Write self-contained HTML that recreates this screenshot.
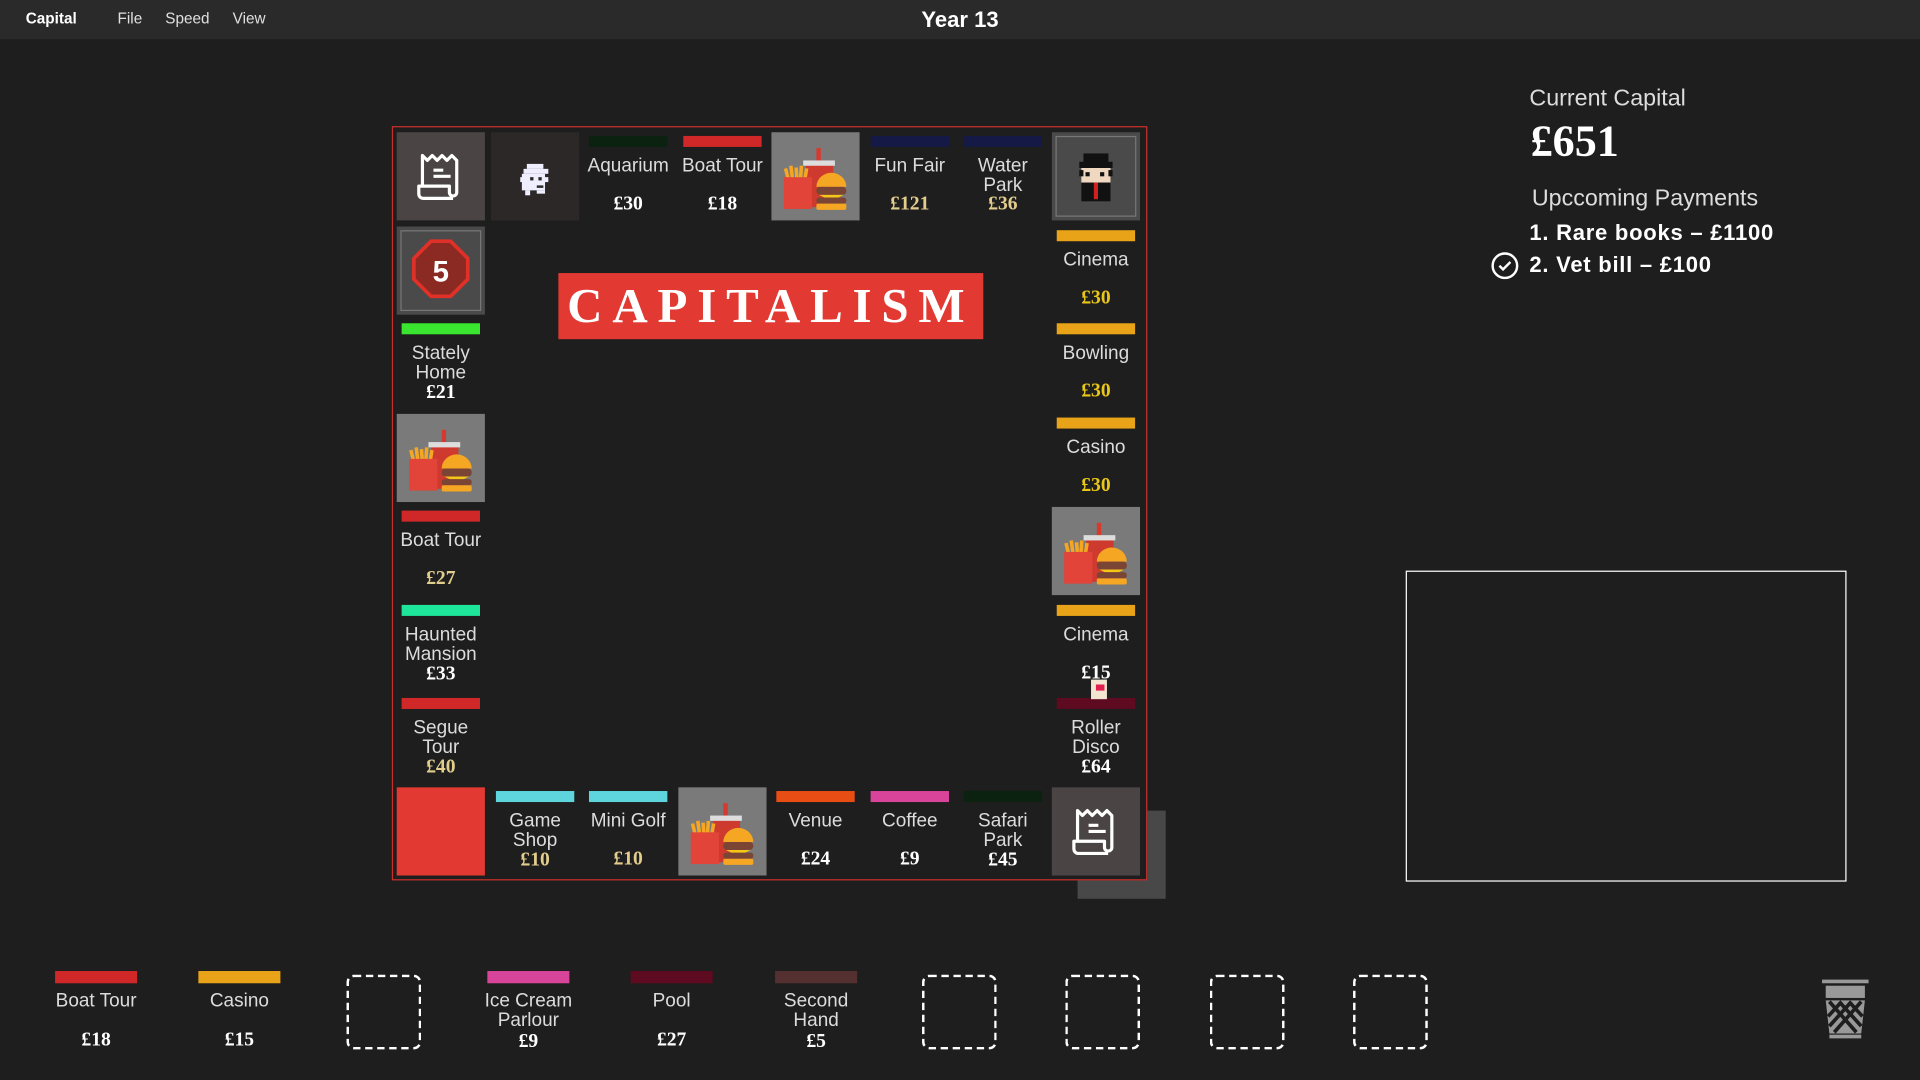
<!DOCTYPE html>
<html><head><meta charset="utf-8">
<style>
*{margin:0;padding:0;box-sizing:border-box}
html,body{width:1920px;height:1080px;overflow:hidden;background:#1f1e1e}
#w{position:absolute;left:0;top:0;width:1568px;height:882px;transform:scale(1.22449);transform-origin:0 0;font-family:"Liberation Sans Narrow","Liberation Sans",sans-serif;color:#e6e6e6}
.a{position:absolute}
.menu{left:0;top:0;width:1568px;height:32px;background:#2a2a2a}
.mi{top:8px;font-size:12.5px;color:#e0e0e0}
.cell{position:absolute;width:72px;height:72px;text-align:center}
.bar{position:absolute;left:4px;top:3px;width:64px;height:9px}
.nm{position:absolute;left:-6px;right:-6px;top:20px;font-size:15.5px;line-height:16px;color:#dcdcdc}
.pr{position:absolute;left:0;right:0;top:50px;font-family:"Liberation Serif",serif;font-weight:bold;font-size:16px;color:#fff}
.tan{color:#e3cd8c}.yel{color:#e8c61a}
.dark{background:#4b4444}
.gray{background:#7a7a7a}
.slot{position:absolute;top:793px;width:67px;height:70px;text-align:center}
.dash{position:absolute;top:796px;width:61px;height:61px;border:2.5px dashed #fff;border-radius:6px}
</style></head><body>
<svg width="0" height="0" style="position:absolute">
<defs>
<symbol id="food" viewBox="0 0 100 100">
<rect x="51" y="18" width="5" height="16" fill="#d63a2e"/>
<rect x="39" y="37" width="31" height="48" fill="#cf3a2f"/>
<rect x="36" y="32" width="36" height="6" fill="#dddddd"/>
<path d="M16 41 l3 12 M22 38 l2 15 M28 40 l1 13 M34 38 l-1 15 M40 41 l-2 12" stroke="#f5a623" stroke-width="4"/>
<rect x="14" y="51" width="32" height="36" fill="#e2443a"/>
<path d="M51 62 a17 16 0 0 1 34 0 z" fill="#f5a623"/>
<rect x="51" y="62" width="34" height="9" rx="4" fill="#7a4534"/>
<path d="M54 71 h28 l-14 7 z" fill="#f5c518"/>
<rect x="51" y="74" width="34" height="7" rx="3" fill="#7a4534"/>
<rect x="51" y="81" width="34" height="7" rx="2" fill="#f5a623"/>
</symbol>
<symbol id="rcpt" viewBox="0 0 72 72">
<path d="M21 44 V19 l4 4 4 -4 4 4 4 -4 4 4 4 -4 4 4 V49 c0 4 -6 4 -6 0 V44 H18 v6 c0 3 2 4 4 4 h24" fill="none" stroke="#fff" stroke-width="2.6" stroke-linejoin="round"/>
<path d="M30 31 h8 M30 36 h14" stroke="#fff" stroke-width="2.6"/>
</symbol>
</defs></svg>
<div id="w">
<div class="a menu"></div>
<div class="a mi" style="left:21px;font-weight:bold;color:#fff">Capital</div>
<div class="a mi" style="left:96px">File</div>
<div class="a mi" style="left:135px">Speed</div>
<div class="a mi" style="left:190px">View</div>
<div class="a" style="left:700px;width:168px;text-align:center;top:6px;font-size:18px;font-weight:bold;color:#fff">Year 13</div>

<div class="a" style="left:880px;top:662px;width:72px;height:72px;background:#484848"></div>
<div class="a" style="left:320px;top:103px;width:617px;height:616px;border:1px solid #c9302c;background:#1f1e1e"></div>

<div class="cell dark" style="left:324px;top:108px"><svg width="72" height="72"><use href="#rcpt"/></svg></div>
<div class="cell" style="left:401px;top:108px;background:#2c2828">
<svg width="72" height="72" viewBox="0 0 72 72"><g transform="translate(36,38) scale(1.35) translate(-36,-38)"><g fill="#eef"><rect x="31" y="29" width="10" height="3"/><rect x="29" y="32" width="15" height="3"/><rect x="28" y="35" width="14" height="10"/><rect x="27" y="37" width="17" height="3"/><rect x="30" y="45" width="3" height="3"/><rect x="37" y="45" width="5" height="2"/></g><rect x="33" y="37" width="2" height="2" fill="#2c2828"/><rect x="38" y="37" width="2" height="2" fill="#2c2828"/><rect x="37" y="42" width="4" height="1.5" fill="#2c2828"/></g></svg></div>
<div class="cell" style="left:477px;top:108px"><div class="bar" style="background:#0b2210"></div><div class="nm">Aquarium</div><div class="pr">£30</div></div>
<div class="cell" style="left:554px;top:108px"><div class="bar" style="background:#d02828"></div><div class="nm">Boat Tour</div><div class="pr">£18</div></div>
<div class="cell gray" style="left:630px;top:108px"><svg width="72" height="72"><use href="#food"/></svg></div>
<div class="cell" style="left:707px;top:108px"><div class="bar" style="background:#141a45"></div><div class="nm">Fun Fair</div><div class="pr tan">£121</div></div>
<div class="cell" style="left:783px;top:108px"><div class="bar" style="background:#141a45"></div><div class="nm">Water<br>Park</div><div class="pr tan">£36</div></div>
<div class="cell" style="left:859px;top:108px;background:#4a4a4a"><div class="a" style="left:3px;top:3px;width:66px;height:66px;border:1px solid #777"></div>
<svg width="72" height="72" viewBox="0 0 72 72"><g transform="translate(36,36) scale(1.7) translate(-36,-36)"><rect x="30" y="25" width="12" height="5" fill="#111"/><rect x="28" y="29" width="16" height="3" fill="#111"/><rect x="29" y="32" width="14" height="7" fill="#f0d8c0"/><rect x="31" y="34" width="2" height="2" fill="#111"/><rect x="38" y="34" width="2" height="2" fill="#111"/><rect x="28" y="33" width="2" height="3" fill="#111"/><rect x="42" y="33" width="2" height="3" fill="#111"/><rect x="29" y="39" width="14" height="9" fill="#111"/><rect x="35" y="39" width="2" height="8" fill="#d02020"/></g></svg></div>

<div class="cell" style="left:324px;top:185px;background:#4a4a4a"><div class="a" style="left:3px;top:3px;width:66px;height:66px;border:1px solid #777"></div>
<svg width="72" height="72" viewBox="0 0 72 72"><polygon points="28,9 44,9 58,23 58,40 44,54 28,54 14,40 14,23" transform="translate(0,3)" fill="#8a2a22" stroke="#e03028" stroke-width="3"/><text x="36" y="45" text-anchor="middle" font-family="Liberation Sans,sans-serif" font-size="24" font-weight="bold" fill="#fff">5</text></svg></div>
<div class="cell" style="left:324px;top:261px"><div class="bar" style="background:#3ae530"></div><div class="nm">Stately<br>Home</div><div class="pr" style="top:51px">£21</div></div>
<div class="cell gray" style="left:324px;top:338px"><svg width="72" height="72"><use href="#food"/></svg></div>
<div class="cell" style="left:324px;top:414px"><div class="bar" style="background:#d02828"></div><div class="nm">Boat Tour</div><div class="pr tan">£27</div></div>
<div class="cell" style="left:324px;top:491px"><div class="bar" style="background:#1de59a"></div><div class="nm">Haunted<br>Mansion</div><div class="pr" style="top:51px">£33</div></div>
<div class="cell" style="left:324px;top:567px"><div class="bar" style="background:#d02828"></div><div class="nm">Segue<br>Tour</div><div class="pr tan" style="top:51px">£40</div></div>
<div class="cell" style="left:324px;top:643px;background:#e23a32"></div>

<div class="cell" style="left:859px;top:185px"><div class="bar" style="background:#e8a318"></div><div class="nm">Cinema</div><div class="pr yel">£30</div></div>
<div class="cell" style="left:859px;top:261px"><div class="bar" style="background:#e8a318"></div><div class="nm">Bowling</div><div class="pr yel">£30</div></div>
<div class="cell" style="left:859px;top:338px"><div class="bar" style="background:#e8a318"></div><div class="nm">Casino</div><div class="pr yel">£30</div></div>
<div class="cell gray" style="left:859px;top:414px"><svg width="72" height="72"><use href="#food"/></svg></div>
<div class="cell" style="left:859px;top:491px"><div class="bar" style="background:#e8a318"></div><div class="nm">Cinema</div><div class="pr">£15</div></div>
<div class="cell" style="left:859px;top:567px"><div class="bar" style="background:#5e0a20"></div><div class="nm">Roller<br>Disco</div><div class="pr" style="top:51px">£64</div></div>
<div class="a" style="left:891px;top:555px;width:13px;height:16px;background:#f2e6d0"></div><div class="a" style="left:895px;top:559px;width:7px;height:5px;background:#e02050"></div>
<div class="cell dark" style="left:859px;top:643px"><svg width="72" height="72"><use href="#rcpt"/></svg></div>

<div class="cell" style="left:401px;top:643px"><div class="bar" style="background:#5ed5dd"></div><div class="nm">Game<br>Shop</div><div class="pr tan" style="top:51px">£10</div></div>
<div class="cell" style="left:477px;top:643px"><div class="bar" style="background:#5ed5dd"></div><div class="nm">Mini Golf</div><div class="pr tan">£10</div></div>
<div class="cell gray" style="left:554px;top:643px"><svg width="72" height="72"><use href="#food"/></svg></div>
<div class="cell" style="left:630px;top:643px"><div class="bar" style="background:#e84e14"></div><div class="nm">Venue</div><div class="pr">£24</div></div>
<div class="cell" style="left:707px;top:643px"><div class="bar" style="background:#d8449a"></div><div class="nm">Coffee</div><div class="pr">£9</div></div>
<div class="cell" style="left:783px;top:643px"><div class="bar" style="background:#0b2210"></div><div class="nm">Safari<br>Park</div><div class="pr" style="top:51px">£45</div></div>

<div class="a" style="left:456px;top:223px;width:347px;height:54px;background:#e23a32;color:#fff;text-align:center;font-family:'Liberation Serif',serif;font-weight:bold;font-size:40px;line-height:54px;letter-spacing:8px">CAPITALISM</div>

<div class="a" style="left:1249px;top:70px;font-family:'Liberation Sans',sans-serif;font-size:19px;color:#ddd">Current Capital</div>
<div class="a" style="left:1250px;top:94px;font-family:'Liberation Serif',serif;font-weight:bold;font-size:36px;color:#fff">£651</div>
<div class="a" style="left:1251px;top:152px;font-family:'Liberation Sans',sans-serif;font-size:19px;color:#ddd">Upccoming Payments</div>
<div class="a" style="left:1249px;top:180px;font-family:'Liberation Sans',sans-serif;font-weight:bold;font-size:18px;letter-spacing:0.6px;color:#fff">1. Rare books – £1100</div>
<div class="a" style="left:1249px;top:206px;font-family:'Liberation Sans',sans-serif;font-weight:bold;font-size:18px;letter-spacing:0.6px;color:#fff">2. Vet bill – £100</div>
<svg class="a" style="left:1217px;top:205px" width="24" height="24" viewBox="0 0 24 24"><circle cx="12" cy="12" r="10" fill="none" stroke="#fff" stroke-width="2"/><path d="M7.5 12 l3 3 6-6" fill="none" stroke="#fff" stroke-width="2"/></svg>
<div class="a" style="left:1148px;top:466px;width:360px;height:254px;border:1px solid #fff"></div>

<div class="slot" style="left:45px"><div class="bar" style="left:0;top:0;width:67px;height:10px;background:#d02828"></div><div class="nm" style="top:17px">Boat Tour</div><div class="pr" style="top:48px">£18</div></div>
<div class="slot" style="left:162px"><div class="bar" style="left:0;top:0;width:67px;height:10px;background:#e8a318"></div><div class="nm" style="top:17px">Casino</div><div class="pr" style="top:48px">£15</div></div>
<div class="dash" style="left:283px"></div>
<div class="slot" style="left:398px"><div class="bar" style="left:0;top:0;width:67px;height:10px;background:#d8449a"></div><div class="nm" style="top:17px">Ice Cream<br>Parlour</div><div class="pr" style="top:49px">£9</div></div>
<div class="slot" style="left:515px"><div class="bar" style="left:0;top:0;width:67px;height:10px;background:#5e0a20"></div><div class="nm" style="top:17px">Pool</div><div class="pr" style="top:48px">£27</div></div>
<div class="slot" style="left:633px"><div class="bar" style="left:0;top:0;width:67px;height:10px;background:#553030"></div><div class="nm" style="top:17px">Second<br>Hand</div><div class="pr" style="top:49px">£5</div></div>
<div class="dash" style="left:753px"></div>
<div class="dash" style="left:870px"></div>
<div class="dash" style="left:988px"></div>
<div class="dash" style="left:1105px"></div>

<svg class="a" style="left:1486px;top:798px" width="42" height="52" viewBox="0 0 42 52"><rect x="2" y="2" width="38" height="3" fill="#999"/><rect x="5" y="7" width="32" height="10" fill="#999"/><path d="M5 19 h32 l-3 27 h-26 z" fill="#999"/><path d="M8 20 l22 25 M16 20 l18 20 M24 20 l11 12 M34 20 l-22 25 M26 20 l-18 20 M18 20 l-11 12" stroke="#1f1e1e" stroke-width="3"/><rect x="8" y="47" width="26" height="3" fill="#999"/></svg>
</div>
</body></html>
